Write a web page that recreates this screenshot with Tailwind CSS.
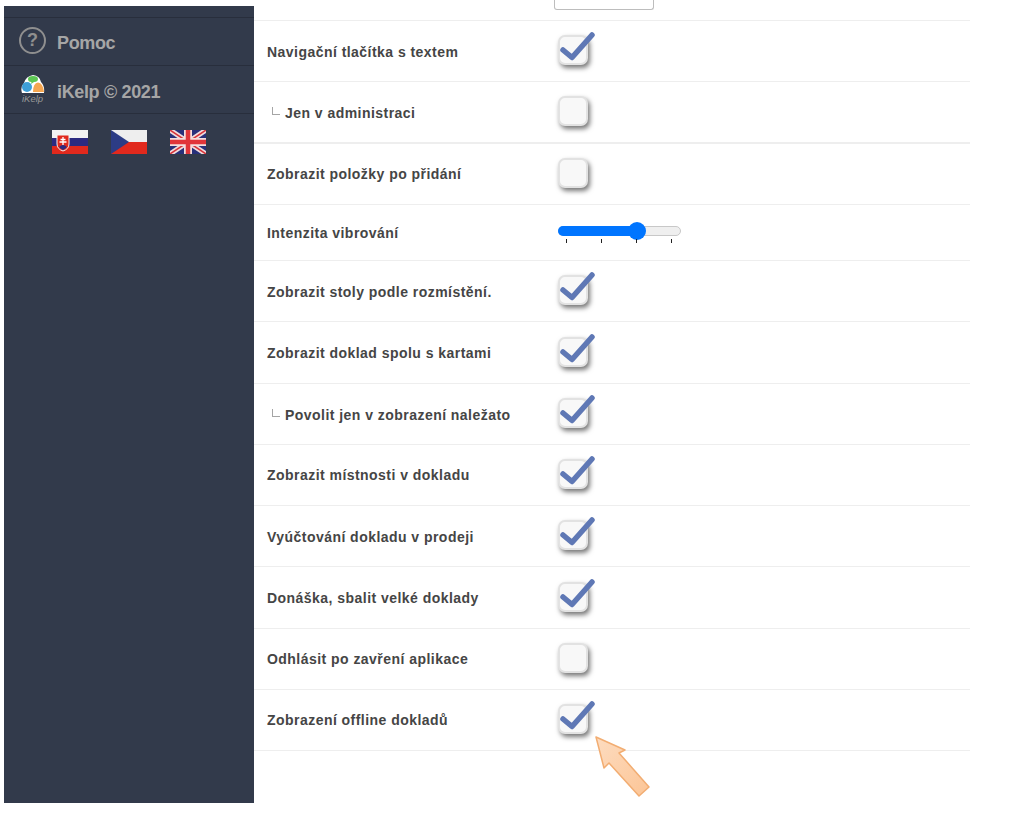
<!DOCTYPE html>
<html lang="sk">
<head>
    <meta charset="UTF-8">
    <title>iKelp nastavenia</title>
    <script src="https://cdn.jsdelivr.net/npm/@tailwindcss/browser@4"></script>
</head>
<body class="bg-white font-['Liberation_Sans',Arial,sans-serif] overflow-hidden">
<div class="relative flex h-[817px] w-[1033px] pl-[4px]">
    <!-- sidebar -->
    <aside class="mt-[6px] h-[797px] w-[250px] shrink-0 bg-[#323a4b] text-[#a6a6a6]">
        <div class="h-[12px] border-b border-[#282e3c]"></div>
        <div class="flex h-[48px] items-center border-b border-[#282e3c] pl-[15px]">
            <div class="mb-[3px] flex h-[27px] w-[27px] items-center justify-center rounded-full border-[2.5px] border-[#8f8f8f] text-[18px] font-bold text-[#8f8f8f]">?</div>
            <span class="ml-[11px] mt-[4px] text-[18px] font-bold tracking-[-0.35px]">Pomoc</span>
        </div>
        <div class="flex h-[48px] items-center border-b border-[#282e3c] pl-[15px]">
            <div class="flex w-[27px] flex-col items-center">
                <svg width="24" height="19" viewBox="0 0 24 19">
                    <path d="M1 18 Q-1 12 3 8 Q5 1 12 0 Q19 1 20 7 Q24 11 23 18 Z" fill="#ffffff"/>
                    <path d="M7 4 Q7 1 12 1 Q17 1 17 4 Q17 7 13 7 L10 9 L10.500 7 Q7 7 7 4Z" fill="#5cc653"/>
                    <circle cx="6" cy="12" r="5" fill="#3d9fd8"/>
                    <path d="M12 17 Q12 8 17 7.500 Q22 8 23 17 Z" fill="#f5a650"/>
                </svg>
                <span class="text-[9.5px] leading-[10px] italic text-[#9a9a9a]">iKelp</span>
            </div>
            <span class="ml-[11px] mt-[5px] text-[18px] font-bold tracking-[-0.35px]">iKelp © 2021</span>
        </div>
        <div class="flex gap-[23px] pl-[48px] pt-[16px]">
            <svg width="36" height="24" viewBox="0 0 36 24">
                <rect width="36" height="8" fill="#f2f2f2"/><rect y="8" width="36" height="8" fill="#2c2a80"/><rect y="16" width="36" height="8" fill="#e1291d"/>
                <path d="M5 5 H17 V14 Q17 19 11 21 Q5 19 5 14 Z" fill="#e1291d" stroke="#f2f2f2"/>
                <path d="M11 7 V15 M8.500 9.500 H13.500 M7.500 12 H14.500" stroke="#fff" stroke-width="1.300"/>
                <path d="M7 17 Q11 13 15 17 Q13 19 11 20 Q9 19 7 17Z" fill="#2c2a80"/>
            </svg>
            <svg width="36" height="24" viewBox="0 0 36 24">
                <rect width="36" height="12" fill="#eeeeee"/><rect y="12" width="36" height="12" fill="#e1291d"/>
                <path d="M0 0 L18 12 L0 24 Z" fill="#2c3c85"/>
            </svg>
            <svg width="36" height="24" viewBox="0 0 36 24">
                <rect width="36" height="24" fill="#28307a"/>
                <path d="M0 0 L36 24 M36 0 L0 24" stroke="#f0dcdc" stroke-width="5"/>
                <path d="M0 0 L36 24 M36 0 L0 24" stroke="#d8343a" stroke-width="1.500"/>
                <path d="M18 0 V24 M0 12 H36" stroke="#f3dede" stroke-width="8"/>
                <path d="M18 0 V24 M0 12 H36" stroke="#e1353a" stroke-width="4.500"/>
            </svg>
        </div>
    </aside>

    <!-- settings list -->
    <main class="w-[716px] text-[14px] font-bold tracking-[0.46px] text-[#454545]">
        <div class="h-[21px] border-b border-[#eeeeee] pl-[300px]">
            <div class="h-[10px] w-[100px] rounded-b-[3px] border border-t-0 border-[#bdbdbd]"></div>
        </div>

        <div class="flex h-[61px] items-center border-b border-[#eeeeee] pl-[13px]">
            <span class="mt-[2px] w-[291px]">Navigační tlačítka s textem</span>
            <div class="relative mb-[2px] h-[30px] w-[30px] rounded-[7px] border-2 border-[#e2e2e2] bg-[#f8f8f8] shadow-[2px_3px_5px_#777777]">
                <svg class="absolute -left-[2px] -top-[6px]" width="40" height="36" viewBox="0 0 40 36" fill="none"><path d="M5 19 L14 26.500 L34 4" stroke="#5f78b5" stroke-width="5.500" stroke-linecap="round" stroke-linejoin="round"/></svg>
            </div>
        </div>
        <div class="flex h-[62px] items-center border-b-2 border-[#eeeeee] pl-[13px]">
            <span class="mt-[2px] flex w-[291px] items-center"><span class="ml-[5px] mr-[5px] -mt-[5px] h-[8px] w-[8px] border-b border-l border-[#a5a5a5]"></span>Jen v administraci</span>
            <div class="mb-[2px] h-[30px] w-[30px] rounded-[7px] border-2 border-[#e2e2e2] bg-[#f8f8f8] shadow-[2px_3px_5px_#777777]"></div>
        </div>
        <div class="flex h-[61px] items-center border-b border-[#eeeeee] pl-[13px]">
            <span class="w-[291px]">Zobrazit položky po přidání</span>
            <div class="mb-[2px] h-[30px] w-[30px] rounded-[7px] border-2 border-[#e2e2e2] bg-[#f8f8f8] shadow-[2px_3px_5px_#777777]"></div>
        </div>
        <div class="flex h-[56px] items-center border-b border-[#eeeeee] pl-[13px]">
            <span class="mt-[2px] w-[291px]">Intenzita vibrování</span>
            <div class="relative mb-[3px] h-[10px] w-[123px] rounded-full border border-[#c8c8c8] bg-[#efefef]">
                <div class="absolute -left-px -top-px h-[10px] w-[80px] rounded-full bg-[#0075ff]"></div>
                <div class="absolute left-[69px] -top-[5px] h-[18px] w-[18px] rounded-full bg-[#0075ff]"></div>
                <div class="absolute left-[7px] top-[12px] h-[4px] w-px bg-[#222222]"></div>
                <div class="absolute left-[42px] top-[12px] h-[4px] w-px bg-[#222222]"></div>
                <div class="absolute left-[77px] top-[12px] h-[4px] w-px bg-[#222222]"></div>
                <div class="absolute left-[112px] top-[12px] h-[4px] w-px bg-[#222222]"></div>
            </div>
        </div>
        <div class="flex h-[61px] items-center border-b border-[#eeeeee] pl-[13px]">
            <span class="mt-[2px] w-[291px]">Zobrazit stoly podle rozmístění.</span>
            <div class="relative mb-[2px] h-[30px] w-[30px] rounded-[7px] border-2 border-[#e2e2e2] bg-[#f8f8f8] shadow-[2px_3px_5px_#777777]">
                <svg class="absolute -left-[2px] -top-[6px]" width="40" height="36" viewBox="0 0 40 36" fill="none"><path d="M5 19 L14 26.500 L34 4" stroke="#5f78b5" stroke-width="5.500" stroke-linecap="round" stroke-linejoin="round"/></svg>
            </div>
        </div>
        <div class="flex h-[62px] items-center border-b border-[#eeeeee] pl-[13px]">
            <span class="mt-[2px] w-[291px]">Zobrazit doklad spolu s kartami</span>
            <div class="relative mb-[2px] h-[30px] w-[30px] rounded-[7px] border-2 border-[#e2e2e2] bg-[#f8f8f8] shadow-[2px_3px_5px_#777777]">
                <svg class="absolute -left-[2px] -top-[6px]" width="40" height="36" viewBox="0 0 40 36" fill="none"><path d="M5 19 L14 26.500 L34 4" stroke="#5f78b5" stroke-width="5.500" stroke-linecap="round" stroke-linejoin="round"/></svg>
            </div>
        </div>
        <div class="flex h-[61px] items-center border-b border-[#eeeeee] pl-[13px]">
            <span class="mt-[2px] flex w-[291px] items-center"><span class="ml-[5px] mr-[5px] -mt-[5px] h-[8px] w-[8px] border-b border-l border-[#a5a5a5]"></span>Povolit jen v zobrazení naležato</span>
            <div class="relative mb-[2px] h-[30px] w-[30px] rounded-[7px] border-2 border-[#e2e2e2] bg-[#f8f8f8] shadow-[2px_3px_5px_#777777]">
                <svg class="absolute -left-[2px] -top-[6px]" width="40" height="36" viewBox="0 0 40 36" fill="none"><path d="M5 19 L14 26.500 L34 4" stroke="#5f78b5" stroke-width="5.500" stroke-linecap="round" stroke-linejoin="round"/></svg>
            </div>
        </div>
        <div class="flex h-[61px] items-center border-b border-[#eeeeee] pl-[13px]">
            <span class="w-[291px]">Zobrazit místnosti v dokladu</span>
            <div class="relative mb-[2px] h-[30px] w-[30px] rounded-[7px] border-2 border-[#e2e2e2] bg-[#f8f8f8] shadow-[2px_3px_5px_#777777]">
                <svg class="absolute -left-[2px] -top-[6px]" width="40" height="36" viewBox="0 0 40 36" fill="none"><path d="M5 19 L14 26.500 L34 4" stroke="#5f78b5" stroke-width="5.500" stroke-linecap="round" stroke-linejoin="round"/></svg>
            </div>
        </div>
        <div class="flex h-[61px] items-center border-b border-[#eeeeee] pl-[13px]">
            <span class="mt-[2px] w-[291px]">Vyúčtování dokladu v prodeji</span>
            <div class="relative mb-[2px] h-[30px] w-[30px] rounded-[7px] border-2 border-[#e2e2e2] bg-[#f8f8f8] shadow-[2px_3px_5px_#777777]">
                <svg class="absolute -left-[2px] -top-[6px]" width="40" height="36" viewBox="0 0 40 36" fill="none"><path d="M5 19 L14 26.500 L34 4" stroke="#5f78b5" stroke-width="5.500" stroke-linecap="round" stroke-linejoin="round"/></svg>
            </div>
        </div>
        <div class="flex h-[62px] items-center border-b border-[#eeeeee] pl-[13px]">
            <span class="mt-[2px] w-[291px]">Donáška, sbalit velké doklady</span>
            <div class="relative mb-[2px] h-[30px] w-[30px] rounded-[7px] border-2 border-[#e2e2e2] bg-[#f8f8f8] shadow-[2px_3px_5px_#777777]">
                <svg class="absolute -left-[2px] -top-[6px]" width="40" height="36" viewBox="0 0 40 36" fill="none"><path d="M5 19 L14 26.500 L34 4" stroke="#5f78b5" stroke-width="5.500" stroke-linecap="round" stroke-linejoin="round"/></svg>
            </div>
        </div>
        <div class="flex h-[61px] items-center border-b border-[#eeeeee] pl-[13px]">
            <span class="w-[291px]">Odhlásit po zavření aplikace</span>
            <div class="mb-[2px] h-[30px] w-[30px] rounded-[7px] border-2 border-[#e2e2e2] bg-[#f8f8f8] shadow-[2px_3px_5px_#777777]"></div>
        </div>
        <div class="flex h-[61px] items-center border-b border-[#eeeeee] pl-[13px]">
            <span class="w-[291px]">Zobrazení offline dokladů</span>
            <div class="relative mb-[2px] h-[30px] w-[30px] rounded-[7px] border-2 border-[#e2e2e2] bg-[#f8f8f8] shadow-[2px_3px_5px_#777777]">
                <svg class="absolute -left-[2px] -top-[6px]" width="40" height="36" viewBox="0 0 40 36" fill="none"><path d="M5 19 L14 26.500 L34 4" stroke="#5f78b5" stroke-width="5.500" stroke-linecap="round" stroke-linejoin="round"/></svg>
            </div>
        </div>
    </main>

    <!-- callout arrow drawn over the screenshot -->
    <svg class="absolute left-[590px] top-[730px]" width="70" height="75" viewBox="590 730 70 75">
        <defs>
            <linearGradient id="arrowFill" x1="0" y1="0" x2="1" y2="1">
                <stop offset="0" stop-color="#fddcc0"/>
                <stop offset="1" stop-color="#fcc596"/>
            </linearGradient>
        </defs>
        <path d="M596 737 L625 750 L619 753 L649 787 L639 796 L609 763 L604 768 Z" fill="url(#arrowFill)" stroke="#f2ad72" stroke-width="1.500" stroke-linejoin="round"/>
    </svg>
</div>
</body>
</html>
